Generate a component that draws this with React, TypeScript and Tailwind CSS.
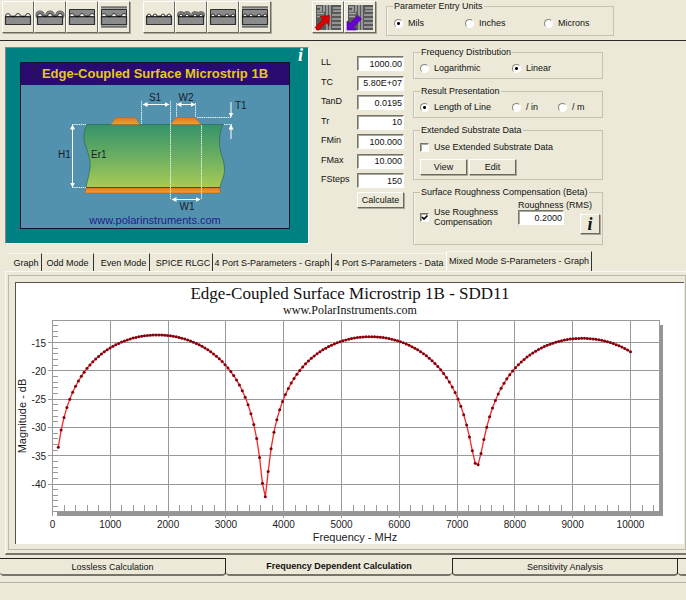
import { useState } from "react";
import type { ReactNode } from "react";

const raised =
  "border border-t-white border-l-white border-r-[#6b695e] border-b-[#6b695e] bg-[#ece9d8] shadow-[1px_1px_0_#aca899]";
const sunken =
  "border border-t-[#77756a] border-l-[#77756a] border-r-white border-b-white shadow-[inset_1px_1px_0_#aaa89c]";

const params = [
  { id: "ll", label: "LL", value: "1000.00" },
  { id: "tc", label: "TC", value: "5.80E+07" },
  { id: "tand", label: "TanD", value: "0.0195" },
  { id: "tr", label: "Tr", value: "10" },
  { id: "fmin", label: "FMin", value: "100.000" },
  { id: "fmax", label: "FMax", value: "10.000" },
  { id: "fsteps", label: "FSteps", value: "150" },
];

const graphTabs = [
  { label: "Graph", width: "w-[35px] pl-[4px]" },
  { label: "Odd Mode", width: "w-[52px]" },
  { label: "Even Mode", width: "w-[56px] pl-[4px]" },
  { label: "SPICE RLGC", width: "w-[63px] pl-[4px]" },
  { label: "4 Port S-Parameters - Graph", width: "w-[119px]" },
  { label: "4 Port S-Parameters - Data", width: "w-[114px]" },
  { label: "Mixed Mode S-Parameters - Graph", width: "w-[146px]" },
];

const pageTabs = ["Lossless Calculation", "Frequency Dependent Calculation", "Sensitivity Analysis"];

type Kind = "surface" | "coated" | "embedded" | "stripline";
const kinds: Kind[] = ["surface", "coated", "embedded", "stripline"];

function StructureIcon({ kind, traces }: { kind: Kind; traces: number[] }) {
  const deep = kind === "embedded" || kind === "stripline";
  const r = traces.length > 3 ? 2 : 2.5;
  return (
    <svg viewBox="0 0 30 30" className="size-[30px]" aria-hidden="true">
      {kind === "stripline" && (
        <>
          <path d="M2 5h26v20H2z" fill="#a4a4a4" />
          <path d="M2 5h26M2 25h26" stroke="#3c3c3c" strokeWidth="1.200" />
        </>
      )}
      {deep && <path d="M2.500 7.500h25v7h-25z" fill="#8a8a8a" stroke="#303030" />}
      {kind === "coated" && (
        <>
          {traces.map((x) => (
            <circle key={x} cx={x} cy="13" r={r + 1.6} fill="#858585" stroke="#4c4c4c" strokeWidth=".7" />
          ))}
          <path d="M2 12h26v4H2z" fill="#808080" />
        </>
      )}
      <path d="M2 14.500h26v8H2z" fill="#8c8c8c" />
      <path d="M2.500 14.500v8h25v-8" fill="none" stroke="#303030" strokeWidth="1.200" />
      <path d="M2 14.500h26" stroke="#111" strokeWidth="1.600" />
      {traces.map((x) => (
        <path key={x} d={`M${x - r} 14.500a${r} ${r + 0.5} 0 0 1 ${r * 2} 0z`} fill="#f4f4f4" stroke="#222" strokeWidth=".9" />
      ))}
    </svg>
  );
}

function BoardIcon({ out }: { out?: boolean }) {
  return (
    <svg viewBox="0 0 30 30" className="size-[30px]" aria-hidden="true">
      <path d="M3 3h25v25H3z" fill="#585858" />
      <path
        d="M4 5h4v4H4M4 11.500h7M4 14.500h6M11 3v7M14 3v25M17 3v25M20 6h8M20 9h8M19 13h9M19 17h9M19 21h9M19 25h9"
        stroke="#a8a8a8"
        strokeWidth="1.600"
        fill="none"
      />
      {out ? (
        <path d="M2 28V19l3 2.500 8-8 3.500 3.500-8 8L11.500 28z" fill="#6a00d8" stroke="#3c0080" strokeWidth=".6" />
      ) : (
        <path d="M16.500 13.500 7 14.500l3 3-8 8L5 28.500l8-8 3 3z" fill="#e00000" stroke="#700" strokeWidth=".6" />
      )}
    </svg>
  );
}

function Group({ title, className = "", children }: { title: string; className?: string; children: ReactNode }) {
  return (
    <fieldset className={`min-w-0 border border-[#c5c2b2] px-[6px] shadow-[inset_1px_0_0_#f8f7f0] ${className}`}>
      <legend className="h-[10px] px-px leading-[10px]">{title}</legend>
      {children}
    </fieldset>
  );
}

function Radio({ name, label, checked, className = "" }: { name: string; label: string; checked?: boolean; className?: string }) {
  return (
    <label className={`flex items-center gap-[5px] leading-[12px] ${className}`}>
      <input
        type="radio"
        name={name}
        defaultChecked={checked}
        className="size-[9px] appearance-none rounded-full border border-t-[#88867a] border-l-[#88867a] border-r-white border-b-white bg-white checked:bg-[radial-gradient(circle,#000_1px,#fff_2px)]"
      />
      {label}
    </label>
  );
}

function Checkbox({ checked }: { checked?: boolean }) {
  return (
    <span className="grid size-[9px] shrink-0">
      <input
        type="checkbox"
        defaultChecked={checked}
        className={`peer col-start-1 row-start-1 size-[9px] appearance-none bg-white ${sunken}`}
      />
      <svg viewBox="0 0 9 9" className="pointer-events-none invisible col-start-1 row-start-1 size-[9px] peer-checked:visible">
        <path d="m2 4 2 2 3.500-3.500" fill="none" stroke="#000" strokeWidth="1.700" />
      </svg>
    </span>
  );
}

function Arrow({ x1, y1, x2, y2, both = true }: { x1: number; y1: number; x2: number; y2: number; both?: boolean }) {
  return (
    <line x1={x1} y1={y1} x2={x2} y2={y2} stroke="#fff" markerEnd="url(#head)" markerStart={both ? "url(#head)" : undefined} />
  );
}

function StructureDiagram() {
  return (
    <svg viewBox="21 85 268 143" className="block w-full" fontFamily="'Liberation Sans', sans-serif" fontSize="10" fill="#16202c">
      <defs>
        <linearGradient id="board" x1="0" y1="0" x2="0" y2="1">
          <stop offset="0" stopColor="#35936a" />
          <stop offset=".5" stopColor="#6aae62" />
          <stop offset="1" stopColor="#a9cb55" />
        </linearGradient>
        <linearGradient id="copper" x1="0" y1="0" x2="0" y2="1">
          <stop offset="0" stopColor="#e0762a" />
          <stop offset="1" stopColor="#f5a02c" />
        </linearGradient>
        <marker id="head" viewBox="0 0 5 5" refX="4.500" refY="2.500" markerWidth="5" markerHeight="5" orient="auto-start-reverse">
          <path d="M0 0 5 2.500 0 5z" fill="#fff" />
        </marker>
      </defs>
      <path
        d="M87 124.500C84 130 83 137 85 144C88 153 91 160 90 168C89 176 87 181 86 187.500H220C221 181 224 178 224.500 171C225 160 219 153 219.500 141C219.500 134 221 129 223 124.500z"
        fill="url(#board)"
        stroke="#2c6650"
        strokeWidth=".7"
      />
      <path d="M85.500 187.500H220V193H85.500z" fill="url(#copper)" stroke="#a85a20" strokeWidth=".5" />
      <path d="M86 187.500H220" stroke="#70401c" />
      <path d="m111 124.500 5-7h19l5 7zM171 124.500l5-7h19l6 7z" fill="url(#copper)" stroke="#b0622a" strokeWidth=".5" />
      <path
        d="M141.500 101v23M170.500 101v98M176.500 103v14M195.500 103v14M201.500 125v74M197 117.500h34M224 124.500h8M72 124.500h14M72 187.500h14"
        stroke="#e4eff2"
        strokeDasharray="1.500 .7"
        fill="none"
      />
      <Arrow x1={143} y1={104.5} x2={169} y2={104.5} />
      <Arrow x1={177} y1={104.5} x2={195} y2={104.5} />
      <Arrow x1={172} y1={199.5} x2={200} y2={199.5} />
      <Arrow x1={72.5} y1={125} x2={72.5} y2={187} />
      <Arrow x1={231} y1={102} x2={231} y2={117} both={false} />
      <Arrow x1={231} y1={139} x2={231} y2={125} both={false} />
      <text x="155" y="101" textAnchor="middle">S1</text>
      <text x="186" y="101" textAnchor="middle">W2</text>
      <text x="235" y="109">T1</text>
      <text x="58" y="158">H1</text>
      <text x="91" y="158">Er1</text>
      <text x="187" y="210" textAnchor="middle">W1</text>
      <text x="155" y="224" textAnchor="middle" fontSize="11" fill="#221c8c">www.polarinstruments.com</text>
    </svg>
  );
}

// plot scale: 0 MHz at x=52.5, -15 dB at y=342.5
const px = (mhz: number) => 52.5 + mhz * 0.0578;
const py = (db: number) => 342.5 - (db + 15) * 5.66;

// reflection of a slightly lossy line, nulls at every half wavelength
const NULL_MHZ = 3672;
function sdd11(f: number) {
  const theta = (Math.PI * f) / NULL_MHZ + 0.015 * Math.max(0, 1 - f / NULL_MHZ);
  const loss = Math.exp(-f * 0.00002);
  const re = 1 - loss * Math.cos(2 * theta);
  const im = loss * Math.sin(2 * theta);
  return -13.5 + 20 * Math.log10(Math.hypot(re, im) / 2);
}

const points = Array.from({ length: 200 }, (_, i) => {
  const f = 100 + (i * 9900) / 199;
  return [px(f), py(sdd11(f))];
});
const majorX = Array.from({ length: 11 }, (_, i) => i * 1000);
const minorX = Array.from({ length: 52 }, (_, i) => (i + 1) * 200);
const majorY = [-15, -20, -25, -30, -35, -40];
const minorY = Array.from({ length: 33 }, (_, i) => -12 - i);

function Plot() {
  return (
    <svg viewBox="16 317 668 227" className="block w-full" fontFamily="'Liberation Sans', sans-serif" fontSize="10" fill="#222">
      <path d="M57 511h602V325h4v191H57z" fill="#959595" />
      <g stroke="#999" shapeRendering="crispEdges">
        <path d="M52.500 516V320.500H659V511" fill="none" />
        <path d="M52.500 511H659" />
        {majorX.slice(1).map((v) => (
          <line key={v} x1={px(v)} x2={px(v)} y1="320.500" y2="518" />
        ))}
        {majorY.map((v) => (
          <line key={v} x1="48" x2="659" y1={py(v)} y2={py(v)} />
        ))}
        {minorX.filter((v) => v <= 10400).map((v) => (
          <line key={v} x1={px(v)} x2={px(v)} y1="505" y2="511" />
        ))}
        {minorY.map((v) => (
          <line key={v} x1="53" x2="58" y1={py(v)} y2={py(v)} />
        ))}
      </g>
      <polyline points={points.map((p) => p.join(",")).join(" ")} fill="none" stroke="#f82828" strokeWidth="1.300" />
      {points.map(([x, y]) => (
        <circle key={x} cx={x} cy={y} r="1.500" fill="#80000e" />
      ))}
      {majorX.map((v) => (
        <text key={v} x={px(v)} y="528" textAnchor="middle">{v}</text>
      ))}
      {majorY.map((v) => (
        <text key={v} x="46" y={py(v) + 4} textAnchor="end">{v}</text>
      ))}
      <text x="355" y="541" fontSize="11" textAnchor="middle">Frequency - MHz</text>
      <text transform="translate(26 416) rotate(-90)" fontSize="11" textAnchor="middle">Magnitude - dB</text>
    </svg>
  );
}

export default function App() {
  const [tab, setTab] = useState(6);
  const [page, setPage] = useState(1);

  return (
    <div className="min-h-screen overflow-hidden bg-[#ece9d8] font-['Liberation_Sans',sans-serif] text-[9px] leading-[10px] text-[#111]">
      <header className="flex h-[41px] items-start border-b border-[#2c2a2a] pl-[2px] pt-px">
        <div className="flex">
          {kinds.map((k) => (
            <button key={k} aria-label={`Differential ${k}`} className={`size-[32px] ${raised}`}>
              <StructureIcon kind={k} traces={[5, 15, 25]} />
            </button>
          ))}
        </div>
        <div className="ml-[13px] flex">
          {kinds.map((k) => (
            <button key={k} aria-label={`Coplanar ${k}`} className={`size-[32px] ${raised}`}>
              <StructureIcon kind={k} traces={[5, 11, 19, 25]} />
            </button>
          ))}
        </div>
        <div className="ml-[41px] flex">
          <button aria-label="Send to board" className={`size-[32px] ${raised}`}><BoardIcon /></button>
          <button aria-label="Read from board" className={`size-[32px] ${raised}`}><BoardIcon out /></button>
        </div>
        <Group title="Parameter Entry Units" className="ml-[10px] h-[35px] w-[228px]">
          <div className="flex pl-px pt-[6px]">
            <Radio name="units" label="Mils" checked className="w-[71px]" />
            <Radio name="units" label="Inches" className="w-[79px]" />
            <Radio name="units" label="Microns" />
          </div>
        </Group>
      </header>

      <main className="pl-[5px] pt-[6px]">
        <div className="flex items-start">
          <section className="relative w-[304px] border border-t-[#8a8878] border-l-[#8a8878] border-r-white border-b-white bg-[#008080] pb-[14px] pl-[14px] pr-[18px] pt-[14px]">
            <button aria-label="Structure information" className="absolute right-[5px] top-0 font-['Liberation_Serif',serif] text-[18px] leading-[14px] font-bold italic text-white">
              i
            </button>
            <div className="border border-[#101828] bg-[#5392ae]">
              <h1 className="h-[22px] bg-[#280a70] text-center text-[13px] leading-[21px] font-bold text-[#e6c81e]">
                Edge-Coupled Surface Microstrip 1B
              </h1>
              <StructureDiagram />
            </div>
          </section>

          <section className="ml-[12px] mt-[9px] w-[83px]">
            <div className="flex h-[132px] flex-col justify-between">
              {params.map((p) => (
                <div key={p.id} className="flex h-[15px] items-start justify-between">
                  <label htmlFor={p.id} className="leading-[12px]">{p.label}</label>
                  <input id={p.id} defaultValue={p.value} className={`h-[15px] w-[47px] bg-white pr-px text-right ${sunken}`} />
                </div>
              ))}
            </div>
            <button className={`ml-auto mt-[4px] block h-[16px] w-[47px] ${raised}`}>Calculate</button>
          </section>

          <section className="ml-[9px] flex w-[190px] flex-col">
            <Group title="Frequency Distribution" className="h-[32px]">
              <div className="flex pt-[5px]">
                <Radio name="dist" label="Logarithmic" className="w-[92px]" />
                <Radio name="dist" label="Linear" checked />
              </div>
            </Group>
            <Group title="Result Presentation" className="mt-[7px] h-[32px]">
              <div className="flex pt-[5px]">
                <Radio name="result" label="Length of Line" checked className="w-[92px]" />
                <Radio name="result" label="/ in" className="w-[46px]" />
                <Radio name="result" label="/ m" />
              </div>
            </Group>
            <Group title="Extended Substrate Data" className="mt-[7px] h-[55px]">
              <label className="flex items-center gap-[5px] pt-[7px]">
                <Checkbox />
                Use Extended Substrate Data
              </label>
              <div className="mt-[7px] flex gap-[2px]">
                <button className={`h-[16px] w-[47px] ${raised}`}>View</button>
                <button className={`h-[16px] w-[47px] ${raised}`}>Edit</button>
              </div>
            </Group>
            <Group title="Surface Roughness Compensation (Beta)" className="mt-[7px] h-[58px] pr-0">
              <div className="flex">
                <label className="mt-[8px] flex h-[24px] w-[98px] shrink-0 items-center gap-[5px]">
                  <Checkbox checked />
                  <span>Use Roughness<br />Compensation</span>
                </label>
                <div className="w-[62px] shrink-0 pt-[3px]">
                  <label htmlFor="rms" className="block whitespace-nowrap">Roughness (RMS)</label>
                  <input id="rms" defaultValue="0.2000" className={`block h-[15px] w-[46px] bg-white pr-px text-right ${sunken}`} />
                </div>
                <button aria-label="Roughness information" className={`mt-[17px] size-[20px] shrink-0 font-['Liberation_Serif',serif] text-[18px] leading-[16px] font-bold italic ${raised}`}>
                  i
                </button>
              </div>
            </Group>
          </section>
        </div>

        <div role="tablist" className="mt-[6px] flex h-[20px] items-end pl-[2px]">
          {graphTabs.map((t, i) => (
            <button
              key={t.label}
              role="tab"
              aria-selected={i === tab}
              onClick={() => setTab(i)}
              className={`shrink-0 whitespace-nowrap border-t border-t-[#f8f6ec] ${t.width} ${
                i === tab ? "h-[20px] border-r border-l border-l-white border-r-[#333] pb-[2px]" : i === tab - 1 ? "h-[18px]" : "h-[18px] border-r border-r-[#333]"
              }`}
            >
              {t.label}
            </button>
          ))}
        </div>

        <div className="border-b-2 border-l border-b-[#77756a] border-l-[#faf9f2] border-t border-t-[#faf9f2] pb-[3px] pl-[2px] pt-[3px]">
          <div className="border border-[#bab8aa] pb-[5px] pl-[6px] pr-px pt-[6px]">
            <div className="border-l border-t border-[#55534c] bg-white">
              <h2 className="pt-px text-center font-['Liberation_Serif',serif] text-[17px] leading-[19px]">
                Edge-Coupled Surface Microstrip 1B - SDD11
              </h2>
              <p className="text-center font-['Liberation_Serif',serif] text-[12px] leading-[14px]">www.PolarInstruments.com</p>
              <Plot />
            </div>
          </div>
        </div>
      </main>

      <nav className="mt-[3px] flex h-[18px]">
        {pageTabs.map((label, i) => (
          <button
            key={label}
            onClick={() => setPage(i)}
            className={`w-[33%] max-w-[226px] shrink-0 rounded-b-[4px] border-b-2 border-b-[#77756a] ${
              i === page ? "font-bold" : "border-t border-r border-t-[#222] border-r-[#222]"
            } ${i === 2 ? "border-l border-l-[#222]" : ""}`}
          >
            {label}
          </button>
        ))}
        <span className="grow rounded-bl-[4px] border-b-2 border-t border-b-[#77756a] border-t-[#222]" />
      </nav>
      <footer className="mt-[6px] border-t border-[#b4b2a4]" />
    </div>
  );
}
